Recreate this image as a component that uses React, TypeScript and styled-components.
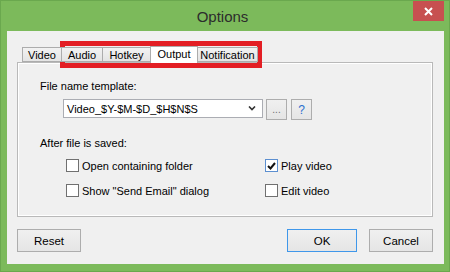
import styled, { createGlobalStyle } from "styled-components";

const GlobalStyle = createGlobalStyle`
  html, body {
    margin: 0;
    padding: 0;
    background: #7cba5b;
  }
  * {
    box-sizing: border-box;
  }
`;

const Window = styled.div`
  position: relative;
  display: flex;
  flex-direction: column;
  width: 450px;
  height: 272px;
  background: #7cba5b;
  border: 1px solid #6aa84e;
  font-family: "Liberation Sans", Arial, sans-serif;
  font-size: 11px;
  color: #000;
`;

const TitleBar = styled.div`
  display: grid;
  grid-template-columns: 1fr auto 1fr;
  height: 30px;
  padding-right: 5px;
`;

const Title = styled.div`
  grid-column: 2;
  align-self: center;
  font-size: 15px;
  color: #2c2c2c;
  margin-top: 1px;
`;

const CloseButton = styled.div`
  grid-column: 3;
  justify-self: end;
  align-self: start;
  display: flex;
  align-items: center;
  justify-content: center;
  width: 31px;
  height: 20px;
  background: #c75050;
`;

const Client = styled.div`
  display: flex;
  flex-direction: column;
  flex: 1;
  margin: 0 5px 7px 6px;
  padding: 15px 11px 11px 10px;
  background: #f0f0f0;
`;

const TabRow = styled.div`
  display: flex;
  align-items: flex-end;
  height: 16px;
  padding-left: 5px;
  position: relative;
  z-index: 1;
`;

const Tab = styled.div<{ $w: number; $active?: boolean }>`
  display: flex;
  align-items: center;
  justify-content: center;
  width: ${({ $w }) => $w}px;
  height: ${({ $active }) => ($active ? 17 : 15)}px;
  margin-bottom: ${({ $active }) => ($active ? -1 : 0)}px;
  border: 1px solid #acacac;
  border-bottom: ${({ $active }) => ($active ? "none" : "1px solid #acacac")};
  margin-left: -1px;
  background: ${({ $active }) =>
    $active ? "#ffffff" : "linear-gradient(#f2f2f2, #e4e4e4)"};
  font-size: 11px;
  padding-bottom: ${({ $active }) => ($active ? 3 : 0)}px;
  &:first-child {
    margin-left: 0;
  }
`;

const Panel = styled.div`
  display: flex;
  flex-direction: column;
  height: 155px;
  border: 1px solid #b9b9b9;
  box-shadow: inset 0 0 0 1px #ffffff;
  padding: 16px 0 0 22px;
`;

const Label = styled.div`
  height: 14px;
  line-height: 14px;
`;

const TemplateRow = styled.div`
  display: flex;
  align-items: flex-start;
  gap: 3px;
  margin: 6px 0 0 23px;
`;

const Combo = styled.div`
  display: flex;
  align-items: center;
  justify-content: space-between;
  width: 200px;
  height: 19px;
  padding: 0 6px 0 3px;
  background: #fff;
  border: 1px solid #abadb3;
`;

const SmallButton = styled.div<{ $blue?: boolean }>`
  display: flex;
  align-items: center;
  justify-content: center;
  width: 21px;
  height: 21px;
  margin-left: ${({ $blue }) => ($blue ? 1 : 0)}px;
  border: 1px solid #adadad;
  background: linear-gradient(#f0f0f0, #e5e5e5);
  color: ${({ $blue }) => ($blue ? "#2a6fcf" : "#707070")};
  font-size: ${({ $blue }) => ($blue ? 12 : 10)}px;
  line-height: 1;
`;

const SavedLabel = styled(Label)`
  margin-top: 16px;
`;

const CheckGrid = styled.div`
  display: grid;
  grid-template-columns: 199px auto;
  row-gap: 12px;
  margin: 9px 0 0 26px;
`;

const CheckItem = styled.div`
  display: flex;
  align-items: center;
  gap: 3px;
  height: 13px;
`;

const Box = styled.div<{ $checked?: boolean }>`
  display: flex;
  align-items: center;
  justify-content: center;
  width: 13px;
  height: 13px;
  border: 1px solid ${({ $checked }) => ($checked ? "#5c8fd0" : "#707070")};
  background: #fff;
`;

const ButtonRow = styled.div`
  display: flex;
  align-items: center;
  gap: 12px;
  margin-top: 12px;
`;

const Button = styled.div<{ $w: number; $default?: boolean }>`
  display: flex;
  align-items: center;
  justify-content: center;
  width: ${({ $w }) => $w}px;
  height: 23px;
  border: 1px solid ${({ $default }) => ($default ? "#3f97ea" : "#adadad")};
  background: linear-gradient(#f0f0f0, #e5e5e5);
  font-size: 11.5px;
`;

const Spacer = styled.div`
  flex: 1;
`;

const Annotation = styled.div`
  position: absolute;
  left: 59px;
  top: 40px;
  width: 202px;
  height: 27px;
  border: 5px solid #e31e24;
  pointer-events: none;
`;

const tabs = [
  { name: "Video", w: 40 },
  { name: "Audio", w: 42 },
  { name: "Hotkey", w: 49 },
  { name: "Output", w: 48, active: true },
  { name: "Notification", w: 61 },
];

const CheckMark = () => (
  <svg width="9" height="8" viewBox="0 0 9 8">
    <path d="M1 4 L3.5 6.5 L8 1" fill="none" stroke="#111" strokeWidth="2" />
  </svg>
);

const Check = ({ label, checked }: { label: string; checked?: boolean }) => (
  <CheckItem>
    <Box $checked={checked}>{checked && <CheckMark />}</Box>
    <span>{label}</span>
  </CheckItem>
);

export default function App() {
  return (
    <>
      <GlobalStyle />
      <Window>
        <TitleBar>
          <Title>Options</Title>
          <CloseButton>
            <svg width="9" height="9" viewBox="0 0 9 9">
              <path d="M1 1 L8 8 M8 1 L1 8" stroke="#fff" strokeWidth="2" />
            </svg>
          </CloseButton>
        </TitleBar>
        <Client>
          <TabRow>
            {tabs.map((t) => (
              <Tab key={t.name} $w={t.w} $active={t.active}>
                {t.name}
              </Tab>
            ))}
          </TabRow>
          <Panel>
            <Label>File name template:</Label>
            <TemplateRow>
              <Combo>
                <span>Video_$Y-$M-$D_$H$N$S</span>
                <svg width="8" height="5" viewBox="0 0 8 5">
                  <path d="M1 0.5 L4 3.5 L7 0.5" fill="none" stroke="#333" strokeWidth="1.6" />
                </svg>
              </Combo>
              <SmallButton>...</SmallButton>
              <SmallButton $blue>?</SmallButton>
            </TemplateRow>
            <SavedLabel>After file is saved:</SavedLabel>
            <CheckGrid>
              <Check label="Open containing folder" />
              <Check label="Play video" checked />
              <Check label={'Show "Send Email" dialog'} />
              <Check label="Edit video" />
            </CheckGrid>
          </Panel>
          <ButtonRow>
            <Button $w={64}>Reset</Button>
            <Spacer />
            <Button $w={70} $default>
              OK
            </Button>
            <Button $w={64}>Cancel</Button>
          </ButtonRow>
        </Client>
        <Annotation />
      </Window>
    </>
  );
}
